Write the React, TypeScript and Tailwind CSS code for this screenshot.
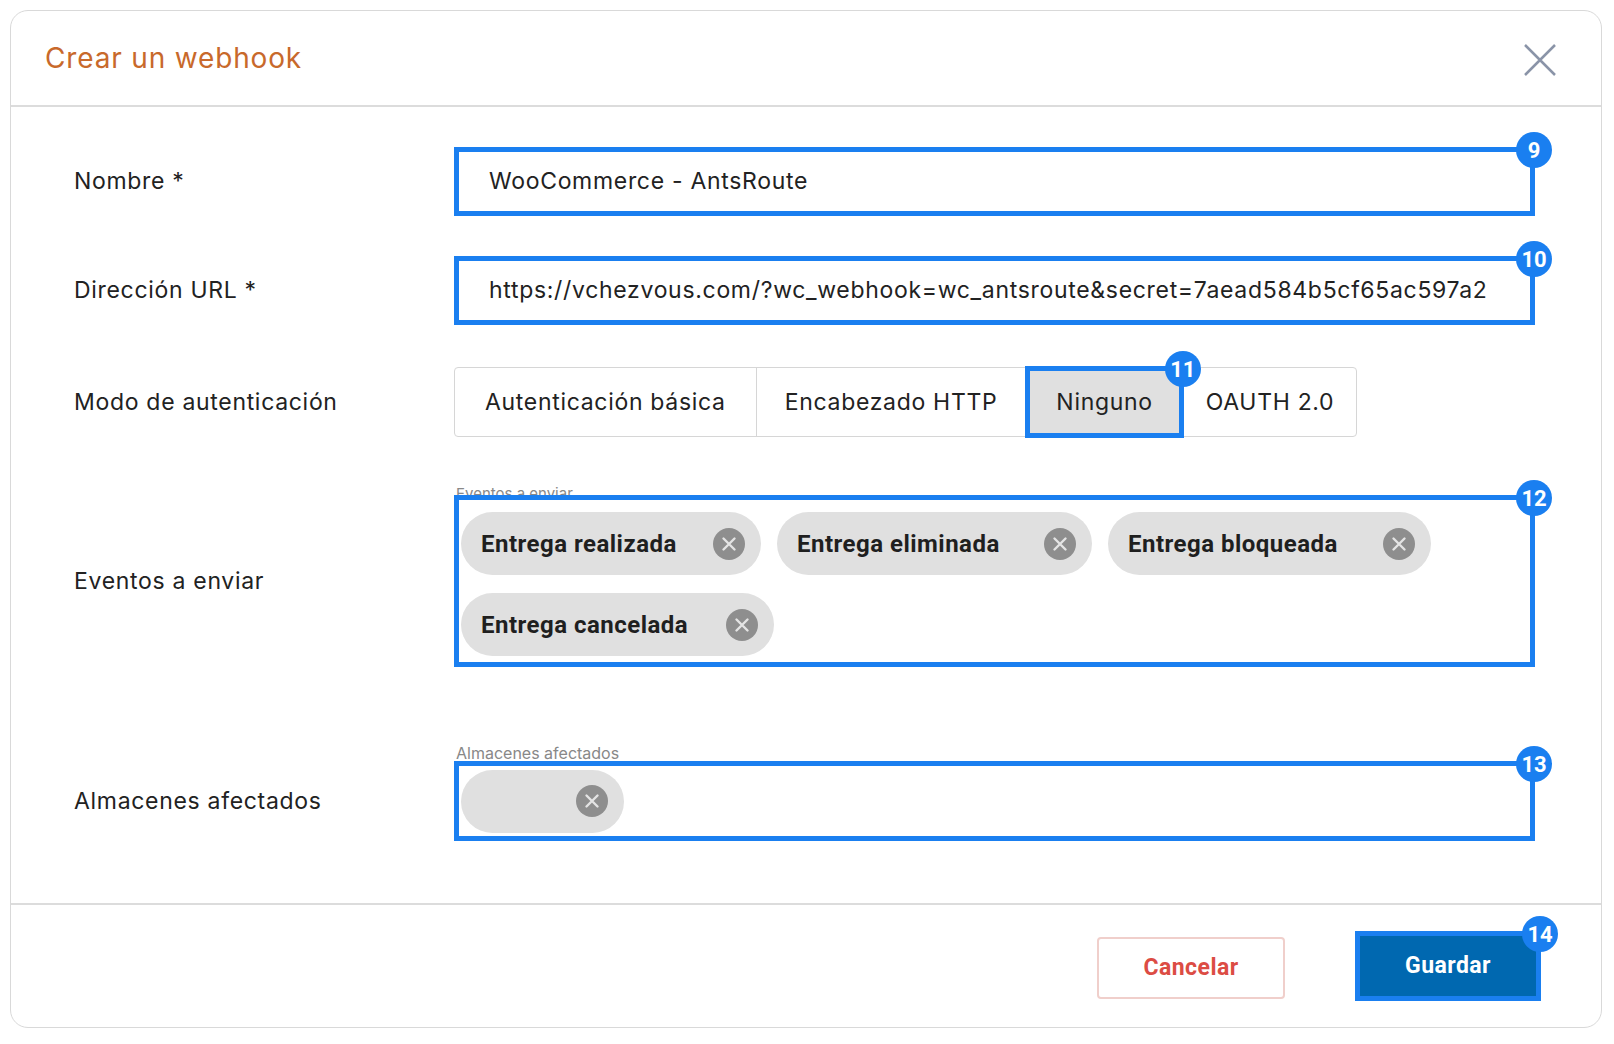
import React from "react";

const BLUE = "border-[#1a7ff0]";

function Badge({ n }: { n: number }) {
  return (
    <span className="absolute -right-[22px] -top-[20px] flex h-[36px] w-[36px] items-center justify-center rounded-full bg-[#1a7ff0] text-[22px] font-bold tracking-normal text-white" style={{ fontFamily: "Roboto, sans-serif" }}>
      {n}
    </span>
  );
}

function XCircle() {
  return (
    <svg width="32" height="32" viewBox="0 0 32 32">
      <circle cx="16" cy="16" r="16" fill="#8e8e8e" />
      <path d="M10.5 10.5 L21.5 21.5 M21.5 10.5 L10.5 21.5" stroke="#e4e4e4" strokeWidth="2.4" strokeLinecap="round" />
    </svg>
  );
}

function Chip({ label, w }: { label: string; w?: string }) {
  return (
    <div className={`flex h-[63px] items-center gap-5 rounded-full bg-[#e0e0e0] pl-5 pr-4 ${w ?? ""}`} style={{ fontFamily: "Roboto, 'Liberation Sans', sans-serif" }}>
      <span className="flex-1 text-[24px] font-bold tracking-[0.02em] text-[#1f1f1f]">{label}</span>
      <XCircle />
    </div>
  );
}

function Row({ label, children, className }: { label: string; children: React.ReactNode; className?: string }) {
  return (
    <div className={`flex items-center ${className ?? ""}`}>
      <div className="w-[380px] shrink-0 text-[23px] tracking-[0.03em] text-[#222]">{label}</div>
      <div className="flex-1">{children}</div>
    </div>
  );
}

export default function App() {
  return (
    <div className="h-[1044px] w-[1614px] bg-white p-[10px]" style={{ fontFamily: "Inter, 'Open Sans', sans-serif" }}>
      <div className="flex h-[1018px] w-[1592px] flex-col rounded-[18px] border border-[#d9d9d9]">
        <div className="flex h-[96px] items-center justify-between border-b-2 border-[#dcdcdc] pl-[34px] pr-[44px]">
          <h1 className="text-[28px] tracking-[0.03em] text-[#c8692b]">Crear un webhook</h1>
          <svg width="34" height="34" viewBox="0 0 34 34" className="mt-1">
            <path d="M2 2 L32 32 M32 2 L2 32" stroke="#8a94a8" strokeWidth="2.5" />
          </svg>
        </div>

        <div className="flex-1 pl-[63px] pr-[66px] pt-[40px]">
          <Row label="Nombre *">
            <div className={`relative flex h-[69px] items-center border-[5px] ${BLUE} px-[30px] text-[23px] tracking-[0.03em] text-[#222]`}>
              WooCommerce - AntsRoute
              <Badge n={9} />
            </div>
          </Row>
          <Row label="Dirección URL *" className="mt-[40px]">
            <div className={`relative flex h-[69px] items-center border-[5px] ${BLUE} px-[30px] text-[23px] tracking-[0.03em] text-[#222]`}>
              <span className="overflow-hidden whitespace-nowrap">https://vchezvous.com/?wc_webhook=wc_antsroute&amp;secret=7aead584b5cf65ac597a2</span>
              <Badge n={10} />
            </div>
          </Row>
          <Row label="Modo de autenticación" className="mt-[42px]">
            <div className="flex h-[70px] w-fit rounded border border-[#d6d6d6] text-[23px] tracking-[0.03em] text-[#222]">
              <div className="flex items-center border-r border-[#d6d6d6] px-[30px]">Autenticación básica</div>
              <div className="flex items-center px-[28px]">Encabezado HTTP</div>
              <div className={`relative -my-[2px] flex items-center border-[5px] ${BLUE} bg-[#e0e0e0] px-[26px]`}>
                Ninguno
                <Badge n={11} />
              </div>
              <div className="flex items-center px-[22px]">OAUTH 2.0</div>
            </div>
          </Row>
          <Row label="Eventos a enviar" className="mt-[58px]">
            <div className="relative">
              <div className="absolute -top-[12px] left-[2px] text-[15px] text-[#888]">Eventos a enviar</div>
              <div className={`relative flex flex-wrap gap-x-[16px] gap-y-[18px] border-[5px] ${BLUE} px-[2px] pt-[12px] pb-[6px]`}>
                <Chip label="Entrega realizada" w="w-[300px]" />
                <Chip label="Entrega eliminada" w="w-[315px]" />
                <Chip label="Entrega bloqueada" w="w-[323px]" />
                <Chip label="Entrega cancelada" w="w-[313px]" />
                <Badge n={12} />
              </div>
            </div>
          </Row>
          <Row label="Almacenes afectados" className="mt-[94px]">
            <div className="relative">
              <div className="absolute -top-[20px] left-[2px] text-[16px] text-[#888]">Almacenes afectados</div>
              <div className={`relative flex h-[80px] items-center border-[5px] ${BLUE} px-[2px]`}>
                <div className="flex h-[63px] w-[163px] items-center justify-end rounded-full bg-[#e0e0e0] pr-4">
                  <XCircle />
                </div>
                <Badge n={13} />
              </div>
            </div>
          </Row>
        </div>

        <div className="flex h-[124px] items-center justify-end gap-[70px] border-t-2 border-[#dcdcdc] pr-[60px]" style={{ fontFamily: "Roboto, sans-serif" }}>
          <button className="mt-1 h-[62px] w-[188px] rounded border-2 border-[#f0cfcb] text-[23px] font-bold tracking-[0.02em] text-[#dc4c44]">Cancelar</button>
          <button className={`relative h-[70px] w-[186px] border-[5px] ${BLUE} bg-[#0068b0] text-[23px] font-bold tracking-[0.02em] text-white`}>
            Guardar
            <Badge n={14} />
          </button>
        </div>
      </div>
    </div>
  );
}
